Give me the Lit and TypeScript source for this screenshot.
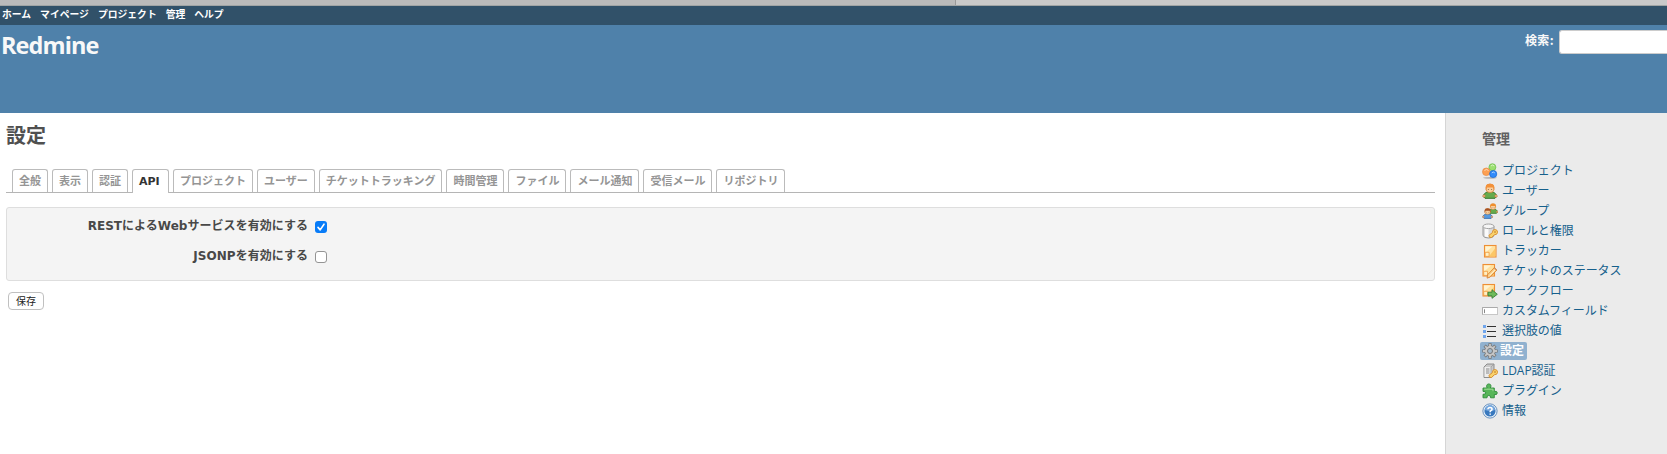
import { LitElement, html, css, svg } from 'lit';
import { customElement } from 'lit/decorators.js';

const person = (x: number, y: number, s: number, hair: string, body: string, edge: string) => svg`
  <g transform="translate(${x} ${y}) scale(${s})">
    <path d="M1.3 13.5C1.5 10.6 4 8.8 8 8.8s6.5 1.8 6.7 4.7L13 15.3H3z" fill=${body} stroke=${edge} stroke-width="1"/>
    <circle cx="2" cy="13" r="1.3" fill="#f0b080" stroke="#b86b28" stroke-width=".4"/><circle cx="14" cy="13" r="1.3" fill="#f0b080" stroke="#b86b28" stroke-width=".4"/>
    <rect x="4.2" y="1.2" width="7.6" height="8.2" rx="3" fill="#f9cf9e" stroke="#d58538" stroke-width=".8"/>
    <path d="M3.7 7.5V4Q4 .8 8 .8t4.3 3.2v3.5l-1.4-3H5.1z" fill=${hair}/>
    <path d="M6.4 6v1M9.6 6v1" stroke="#8b5b32" stroke-width=".8"/>
  </g>`;
const note = svg`
  <rect x="2.5" y="2.5" width="11.5" height="11.5" fill="#ffe2a0" stroke="#ee8f35" stroke-width="1.1"/>
  <path d="M3.5 3.5h7l-7 6z" fill="#fff3d2"/>
  <path d="M13.4 5v8.4H7z" fill="#fcc766"/>
  <path d="M3.2 9.3h3.9v4.1H3.2z" fill="#fff0c4" stroke="#ef983b" stroke-width=".8"/>`;
const key = svg`
  <path d="M7.5 14.3l-.6-2 3.4-2.6q-.1-3 2.6-3.2 2.8.2 2.7 2.8-.3 2.5-3.2 2.5L9.5 14.5z" fill="#f9d26a" stroke="#d88c2a" stroke-width=".9"/>
  <circle cx="13" cy="9" r=".8" fill="#b86e1d"/>`;

const icons: Record<string, unknown> = {
  projects: svg`
    <ellipse cx="8" cy="14.8" rx="7" ry=".9" fill="#b4b4b4"/>
    <circle cx="10.4" cy="4.2" r="3.5" fill="#9be070" stroke="#6cbb4c" stroke-width=".7"/>
    <circle cx="4.3" cy="8.8" r="3.8" fill="#fda052" stroke="#e58a42" stroke-width=".7"/>
    <circle cx="11.2" cy="11" r="3.6" fill="#318bfa" stroke="#1764cf" stroke-width=".7"/>
    <path d="M9 3q1.5-2 3.2 0M2.5 7.5q2-2.2 4 0M9.8 9.9q1.5-1.7 3 0" fill="none" stroke="#fff" stroke-opacity=".6"/>`,
  user: person(0, 0, 1, '#f3913a', '#65aa4c', '#347a2c'),
  group: svg`${person(5.6, 0, 0.68, '#ef8e2c', '#65aa4c', '#347a2c')}${person(0, 4.7, 0.7, '#a65325', '#5599df', '#285fa4')}`,
  roles: svg`
    <path d="M1 3.5v9.2Q2 15 6.5 15t5.5-2.3V3.5z" fill="#dadada" stroke="#8e8e8e" stroke-width=".9"/>
    <path d="M3 5v8.6q2 .6 3.5.6V5z" fill="#fafafa"/>
    <ellipse cx="6.5" cy="3.3" rx="5.5" ry="2.3" fill="#f5f5f5" stroke="#999" stroke-width=".9"/>${key}`,
  tracker: note,
  status: svg`<g transform="translate(-1.5 -1)">${note}</g>
    <path d="M5.5 11.8l6.8-7 2.5 2.3-6.7 7-3 1z" fill="#fbd08a" stroke="#d98230" stroke-width=".9"/>
    <path d="M7.6 12.5l5.3-5.5" stroke="#fff0c9"/><path d="M12.3 4.8l2.5 2.3" stroke="#bd7854"/>`,
  workflow: svg`<g transform="translate(-1.5 -1)">${note}</g>
    <path d="M6 9.2h4V6.7l5.3 4.6-5.3 4v-2.4H6z" fill="#6fbb5a" stroke="#34803a" stroke-width=".9"/>`,
  fields: svg`
    <rect x=".5" y="4.5" width="15" height="7" fill="#fff" stroke="#c7c7c7"/>
    <path d="M.5 11.5v-7h15" fill="none" stroke="#aaa"/><path d="M2.5 6.3v3.8" stroke="#888"/>`,
  list: svg`
    <path d="M1 2h3v3H1zM1 7h3v3H1zM1 12h3v3H1z" fill="#6fa5ec"/>
    <path d="M5 3.5h9M5 8.5h9M5 13.5h9" stroke="#333" stroke-width="1"/>`,
  gear: svg`
    <g fill="none" stroke="#747474" stroke-width="3.2"><path d="M8 .3v15.4M.3 8h15.4M2.6 2.6l10.8 10.8M13.4 2.6L2.6 13.4"/></g>
    <circle cx="8" cy="8" r="5.7" fill="#747474"/>
    <g fill="none" stroke="#c4c4c4" stroke-width="1.8"><path d="M8 1v14M1 8h14M3.1 3.1l9.8 9.8M12.9 3.1L3.1 12.9"/></g>
    <circle cx="8" cy="8" r="5" fill="#c6c6c6"/>
    <circle cx="8" cy="8" r="2.5" fill="#a4bacd" stroke="#777"/>`,
  ldap: svg`
    <path d="M2 4l3-3h7v11l-3 2.5H2z" fill="#c9c9c9" stroke="#858585" stroke-width=".9"/>
    <path d="M2.5 4h6.2v10H2.5z" fill="#ededed"/><path d="M4 6h3.5M4 8h3.5M4 10h3.5" stroke="#8a8a8a"/>
    <path d="M9 4v10M9 4l3-3" stroke="#999" stroke-width=".7"/>${key}`,
  plugin: svg`
    <path d="M1 5h4.2q-.8-1.2-.6-2.3Q5 .9 6.8.9 8.8 1 9 2.8q0 1-.7 2.2h4v3.4q3-.7 3 1.5 0 2.3-3 1.6v3.3H8.6q.2-2.4-1.8-2.4T5 14.8H1v-3.5q2.8.2 2.8-1.4T1 8.4z"
      fill="#58b65a" stroke="#2f8c3b" stroke-width=".9"/>
    <path d="M2.2 6.2h8.8v2" fill="none" stroke="#a0dc96"/>`,
  help: svg`
    <circle cx="8" cy="8" r="7.1" fill="#f3f8fd" stroke="#5784b8" stroke-width=".9"/>
    <circle cx="8" cy="8" r="5.6" fill="#3979be"/>
    <path d="M3 7a5 5 0 0 1 10 0q-5 2-10 0" fill="#76a7dd"/>
    <path d="M5.9 6.3Q6 4.4 8 4.4t2.1 1.7Q10 7.3 8.2 8.2v1M8.2 10.4v1.4" fill="none" stroke="#fff" stroke-width="1.5"/>`,
};

const menu: [string, string][] = [
  ['projects', 'プロジェクト'], ['user', 'ユーザー'], ['group', 'グループ'], ['roles', 'ロールと権限'],
  ['tracker', 'トラッカー'], ['status', 'チケットのステータス'], ['workflow', 'ワークフロー'],
  ['fields', 'カスタムフィールド'], ['list', '選択肢の値'], ['gear', '設定'], ['ldap', 'LDAP認証'],
  ['plugin', 'プラグイン'], ['help', '情報'],
];
const tabs = ['全般', '表示', '認証', 'API', 'プロジェクト', 'ユーザー', 'チケットトラッキング', '時間管理',
  'ファイル', 'メール通知', '受信メール', 'リポジトリ'];

@customElement('app-root')
export class AppRoot extends LitElement {
  static styles = css`
    :host { display: flex; flex-direction: column; height: 454px; overflow: hidden; background: #fff;
      font: 12px/18px "DejaVu Sans", "Noto Sans CJK JP", sans-serif; color: #484848; white-space: nowrap; }
    * { box-sizing: border-box; }
    a { text-decoration: none; color: inherit; }
    .strip { display: flex; flex: 0 0 6px; background: #c9c9c9; border-bottom: 1px solid #a0a4a4; }
    .strip-tab { width: 956px; background: #bababa; border-right: 1px solid #999; }
    .top { flex: 0 0 19px; display: flex; gap: 9px; padding-left: 2px; background: #315169; color: #fff;
      font: bold 9.8px/17px "Noto Sans CJK JP", sans-serif; }
    .header { flex: 0 0 88px; display: flex; justify-content: space-between; background: #4f81aa; color: #f8f8f8; }
    .header h1 { margin: 3px 0 0 1px; font: bold 23.5px/34px "Open Sans", sans-serif; letter-spacing: -.9px; }
    .search { display: flex; align-items: flex-start; gap: 5px; padding-top: 5px; }
    .search label { font: bold 12px/19px "Noto Sans CJK JP", sans-serif; letter-spacing: .4px; }
    .search input { width: 108px; height: 24px; margin: 0; border: 1px solid #ccc; border-right: 0;
      border-radius: 3px 0 0 3px; background: #fff; outline: 0; }
    .main { flex: 1; display: flex; min-height: 0; }
    .content { flex: 0 0 1445px; padding: 8px 10px 0 6px; }
    .content h2 { margin: 0; height: 30px; font: bold 20px/28px "Noto Sans CJK JP", sans-serif; color: #505050; }
    .tabs { display: flex; gap: 4px; height: 24px; margin-top: 18px; padding-left: 6px; border-bottom: 1px solid #b5b5b5; }
    .tab { height: 23px; padding: 0 6px; border: 1px solid #bbb; border-bottom: 0; border-radius: 3px 3px 0 0;
      font: bold 11px/23px "DejaVu Sans", "Noto Sans CJK JP", sans-serif; color: #959595; min-width: 36px; }
    .tab.on { height: 24px; width: 37px; background: #fff; color: #333; }
    .box { height: 74px; margin-top: 14px; padding: 9px 0 0; border: 1px solid #dedede; border-radius: 3px; background: #f4f4f4; }
    .row { display: flex; gap: 7px; height: 30px; align-items: flex-start; }
    .row label { width: 301px; text-align: right; font-weight: bold; line-height: 18px; letter-spacing: .04px; }
    .check { width: 12px; height: 12px; margin-top: 4px; border: 1px solid #949494; border-radius: 3px; background: #fff; }
    .check.on { border: 0; background: #087cf8; }
    .check svg { display: block; }
    .save { display: block; width: 36px; height: 18px; margin: 11px 0 0 2px; padding: 0 0 1px; border: 1px solid #c0c0c0;
      border-radius: 4px; background: #fff; color: #222; font: 10px/15px "Noto Sans CJK JP", sans-serif; }
    .sidebar { flex: 1; padding: 15px 0 0 34px; background: #ebebeb; border-left: 1px solid #d5d5d5; }
    .sidebar h3 { margin: 0 0 14px 2px; font: bold 14px/20px "Noto Sans CJK JP", sans-serif; color: #606060; }
    .link { display: flex; width: max-content; align-items: center; gap: 4px; height: 18px; padding: 0 3px 0 2px; margin-bottom: 2px; color: #16608c;
      font: 12px/18px "Open Sans", "Noto Sans CJK JP", sans-serif; }
    .link span { letter-spacing: -.05px; }
    .link.on { gap: 2px; border-radius: 2px; background: #90b1cf; color: #fff; font-weight: bold; }
    .link svg { flex: none; }
  `;

  render() {
    return html`
      <div class="strip"><div class="strip-tab"></div></div>
      <nav class="top">${['ホーム', 'マイページ', 'プロジェクト', '管理', 'ヘルプ'].map(t => html`<a>${t}</a>`)}</nav>
      <header class="header"><h1>Redmine</h1><div class="search"><label>検索:</label><input type="text"></div></header>
      <div class="main">
        <main class="content">
          <h2>設定</h2>
          <div class="tabs">${tabs.map(t => html`<a class="tab ${t === 'API' ? 'on' : ''}">${t}</a>`)}</div>
          <div class="box">
            <div class="row"><label>RESTによるWebサービスを有効にする</label><span class="check on">
              <svg width="12" height="12" viewBox="0 0 12 12"><path d="M3 6.4l2.2 2.5L9 3.2" fill="none" stroke="#fff" stroke-width="1.6" stroke-linecap="round" stroke-linejoin="round"/></svg></span></div>
            <div class="row"><label>JSONPを有効にする</label><span class="check"></span></div>
          </div>
          <button class="save">保存</button>
        </main>
        <aside class="sidebar"><h3>管理</h3>
          ${menu.map(([i, t]) => html`<a class="link ${i === 'gear' ? 'on' : ''}"><svg width="16" height="16" viewBox="0 0 16 16">${icons[i]}</svg><span>${t}</span></a>`)}
        </aside>
      </div>`;
  }
}
